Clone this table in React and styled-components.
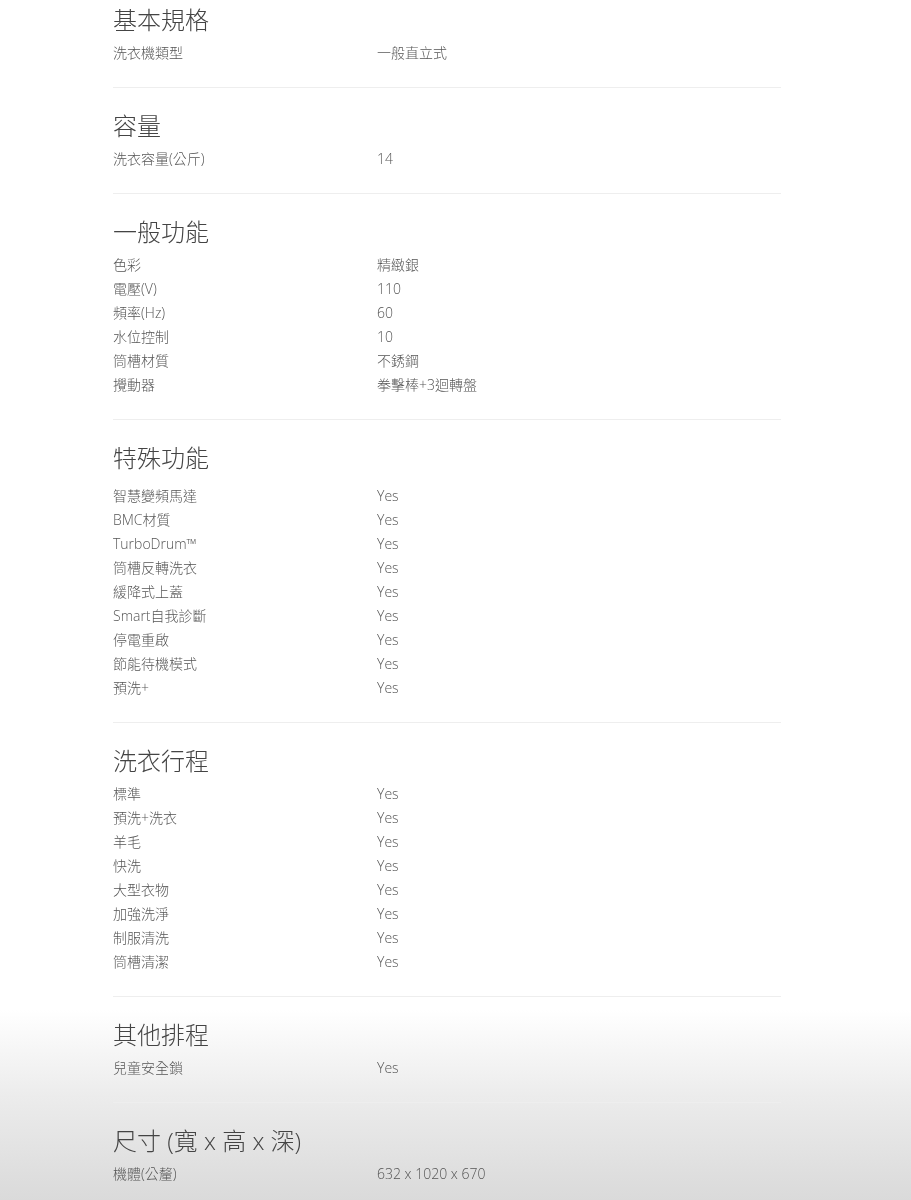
import React from 'react';
import styled, { createGlobalStyle } from 'styled-components';

const GlobalStyle = createGlobalStyle`
  body {
    margin: 0;
    background: #fff;
    font-family: "Open Sans", "Noto Sans CJK TC", sans-serif;
  }
`;

const Page = styled.div`
  width: 668px;
  margin-left: 113px;
  padding-top: 5px;
  padding-bottom: 40px;
`;

const Section = styled.section`
  padding: 0 0 22px;
  border-bottom: ${({ $last }) => ($last ? 'none' : '1px solid #eeeeee')};
  & + & {
    padding-top: 23px;
  }
`;

const Heading = styled.h3`
  margin: 0 0 ${({ $gap }) => $gap}px;
  font-size: 24px;
  line-height: 30px;
  font-weight: 300;
  color: #444;
`;

const Row = styled.div`
  display: grid;
  grid-template-columns: 264px 1fr;
  font-size: 14px;
  line-height: 24px;
  font-weight: 300;
  color: #555;
`;

const Fade = styled.div`
  position: fixed;
  left: 0;
  right: 0;
  bottom: 0;
  height: 190px;
  z-index: -1;
  pointer-events: none;
  background: linear-gradient(to bottom, #ffffff 0%, #ececec 45%, #dadada 100%);
`;

const specs = [
  { title: '基本規格', rows: [['洗衣機類型', '一般直立式']] },
  { title: '容量', rows: [['洗衣容量(公斤)', '14']] },
  {
    title: '一般功能',
    rows: [
      ['色彩', '精緻銀'],
      ['電壓(V)', '110'],
      ['頻率(Hz)', '60'],
      ['水位控制', '10'],
      ['筒槽材質', '不銹鋼'],
      ['攪動器', '拳擊棒+3迴轉盤'],
    ],
  },
  {
    title: '特殊功能',
    gap: 11,
    rows: [
      ['智慧變頻馬達', 'Yes'],
      ['BMC材質', 'Yes'],
      ['TurboDrum™', 'Yes'],
      ['筒槽反轉洗衣', 'Yes'],
      ['緩降式上蓋', 'Yes'],
      ['Smart自我診斷', 'Yes'],
      ['停電重啟', 'Yes'],
      ['節能待機模式', 'Yes'],
      ['預洗+', 'Yes'],
    ],
  },
  {
    title: '洗衣行程',
    rows: [
      ['標準', 'Yes'],
      ['預洗+洗衣', 'Yes'],
      ['羊毛', 'Yes'],
      ['快洗', 'Yes'],
      ['大型衣物', 'Yes'],
      ['加強洗淨', 'Yes'],
      ['制服清洗', 'Yes'],
      ['筒槽清潔', 'Yes'],
    ],
  },
  { title: '其他排程', rows: [['兒童安全鎖', 'Yes']] },
  { title: '尺寸 (寬 x 高 x 深)', rows: [['機體(公釐)', '632 x 1020 x 670']] },
];

const App = () => (
  <>
    <GlobalStyle />
    <Fade />
    <Page>
      {specs.map((s, i) => (
        <Section key={s.title} $last={i === specs.length - 1}>
          <Heading $gap={s.gap || 6}>{s.title}</Heading>
          {s.rows.map(([label, value]) => (
            <Row key={label}>
              <span>{label}</span>
              <span>{value}</span>
            </Row>
          ))}
        </Section>
      ))}
    </Page>
  </>
);

export default App;
